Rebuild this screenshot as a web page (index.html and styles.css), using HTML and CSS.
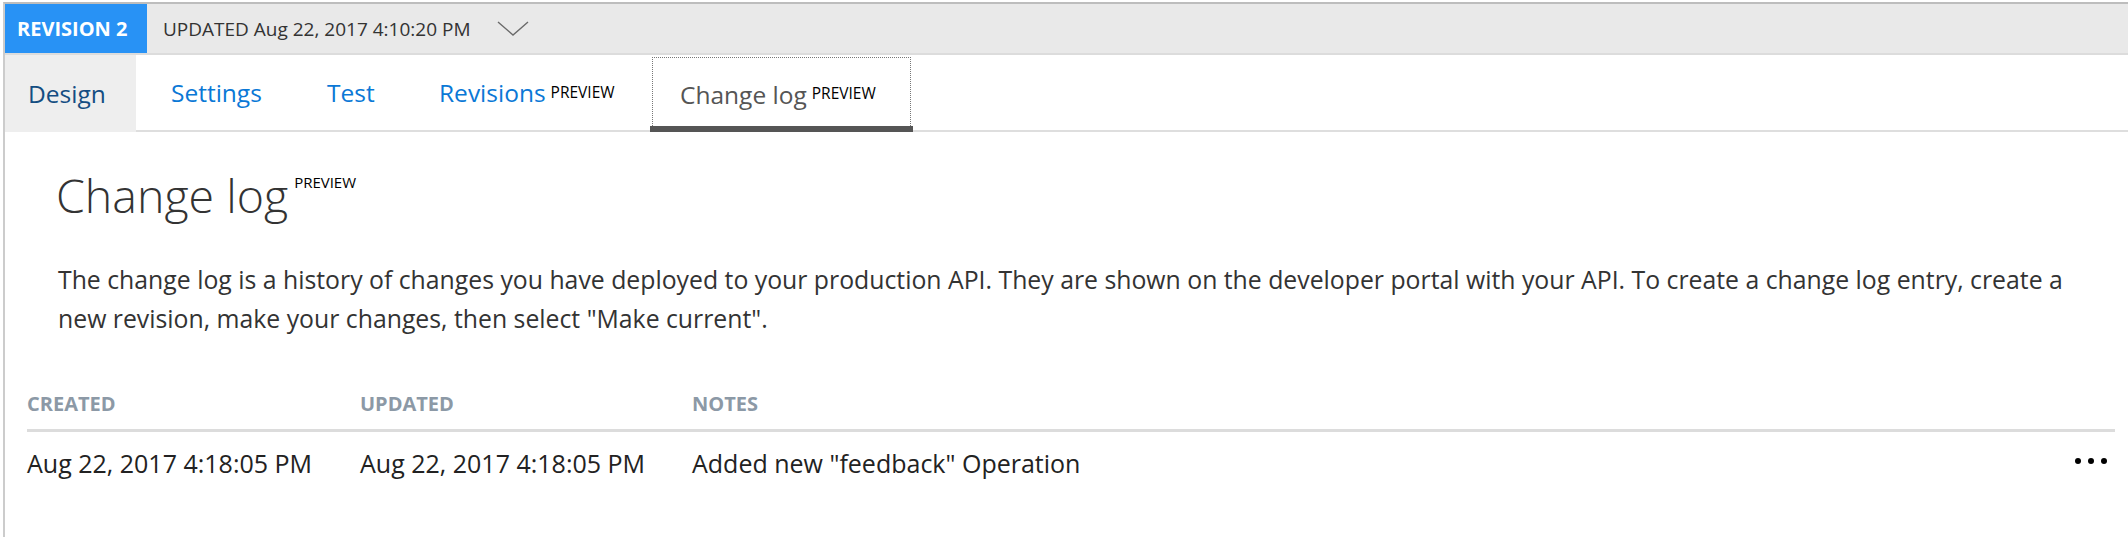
FILE: index.html
```html
<!DOCTYPE html>
<html lang="en">
<head>
<meta charset="utf-8">
<title>Change log</title>
<link rel="stylesheet" href="styles.css">
</head>
<body>
<div class="frame">
  <header class="revbar">
    <div class="rev-badge">REVISION 2</div>
    <div class="rev-updated">UPDATED Aug 22, 2017 4:10:20 PM</div>
    <svg class="chevron" viewBox="0 0 32 15" width="32" height="15" aria-hidden="true">
      <polyline points="1,1 16,14 31,1" fill="none" stroke="#6a6a6a" stroke-width="1.4"/>
    </svg>
  </header>
  <nav class="tabs">
    <a class="tab tab-design">Design</a>
    <a class="tab tab-settings">Settings</a>
    <a class="tab tab-test">Test</a>
    <a class="tab tab-revisions">Revisions<sup class="tab-preview">PREVIEW</sup></a>
    <a class="tab tab-changelog">Change log<sup class="tab-preview">PREVIEW</sup></a>
  </nav>
  <main class="content">
    <h1 class="title">Change log<sup class="title-preview">PREVIEW</sup></h1>
    <p class="desc">The change log is a history of changes you have deployed to your production API. They are shown on the developer portal with your API. To create a change log entry, create a<br>new revision, make your changes, then select "Make current".</p>
    <div class="log">
      <div class="log-head">
        <div class="col">CREATED</div>
        <div class="col">UPDATED</div>
        <div class="col">NOTES</div>
        <div class="col"></div>
      </div>
      <div class="log-row">
        <div class="col">Aug 22, 2017 4:18:05 PM</div>
        <div class="col">Aug 22, 2017 4:18:05 PM</div>
        <div class="col">Added new "feedback" Operation</div>
        <div class="col col-more">
          <svg class="more" viewBox="0 0 32 6" width="32" height="6" aria-hidden="true">
            <circle cx="3" cy="3" r="3" fill="#000"/>
            <circle cx="16" cy="3" r="3" fill="#000"/>
            <circle cx="29" cy="3" r="3" fill="#000"/>
          </svg>
        </div>
      </div>
    </div>
  </main>
</div>
</body>
</html>
```
FILE: styles.css
```css
html, body {
  margin: 0;
  padding: 0;
  background: #fff;
}
body {
  font-family: "Open Sans", "Noto Sans", sans-serif;
  color: #333;
}
.frame {
  margin: 2px 0 0 3px;
  border-top: 2px solid #bdbdbd;
  border-left: 2px solid #cccccc;
  min-height: 533px;
}
.revbar {
  display: flex;
  align-items: center;
  height: 49px;
  background: #e9e9e9;
  border-bottom: 2px solid #dcdcdc;
}
.rev-badge {
  display: flex;
  align-items: center;
  box-sizing: border-box;
  width: 142px;
  height: 49px;
  padding-left: 12px;
  background: #2892f5;
  color: #fff;
  font-weight: 700;
  font-size: 20px;
}
.rev-updated {
  margin-left: 16px;
  font-size: 19px;
  color: #333;
}
.chevron {
  margin-left: 27px;
  margin-top: -1px;
}
.tabs {
  display: flex;
  height: 75px;
  border-bottom: 2px solid #dedede;
}
.tab {
  display: flex;
  align-items: center;
  box-sizing: border-box;
  font-size: 24.5px;
  color: #0a78d6;
  white-space: nowrap;
}
.tab-design {
  width: 131px;
  padding-left: 23px;
  background: #eeeeee;
  color: #144d82;
  margin-bottom: -2px;
}
.tab-settings { width: 159px; padding-left: 35px; }
.tab-test { width: 111px; padding-left: 32px; }
.tab-revisions { width: 246px; padding-left: 33px; }
.tab-changelog {
  position: relative;
  width: 259px;
  padding-left: 27px;
  margin-top: 2px;
  border: 1px dotted #777;
  border-bottom: none;
  color: #555;
}
.tab-changelog::after {
  content: "";
  position: absolute;
  left: -3px;
  right: -3px;
  bottom: -2px;
  height: 6px;
  background: #555;
}
.tab-preview {
  font-size: 15.5px;
  color: #000;
  margin-left: 5px;
  vertical-align: 9px;
  line-height: 1;
}
.content {
  padding: 0 13px 0 22px;
}
.title {
  margin: 35px 0 0 29px;
  font-size: 46.5px;
  font-weight: 300;
  line-height: 56px;
  color: #333;
}
.title-preview {
  font-size: 15px;
  font-weight: 400;
  color: #000;
  margin-left: 6px;
  vertical-align: 25px;
  line-height: 1;
}
.desc {
  margin: 37px 0 0 31px;
  font-size: 24.8px;
  line-height: 39px;
  color: #333;
}
.log {
  margin-top: 54px;
}
.log-head,
.log-row {
  display: grid;
  grid-template-columns: 333px 332px 1fr auto;
  align-items: center;
}
.log-head {
  font-size: 20px;
  font-weight: 700;
  line-height: 24px;
  color: #8c99a6;
  padding-bottom: 13px;
  border-bottom: 3px solid #dcdcdc;
}
.log-row {
  font-size: 25px;
  line-height: 32px;
  color: #222;
  padding-top: 15px;
}
.col-more {
  display: flex;
  align-items: center;
  padding-right: 8px;
  margin-top: -5px;
}
```
